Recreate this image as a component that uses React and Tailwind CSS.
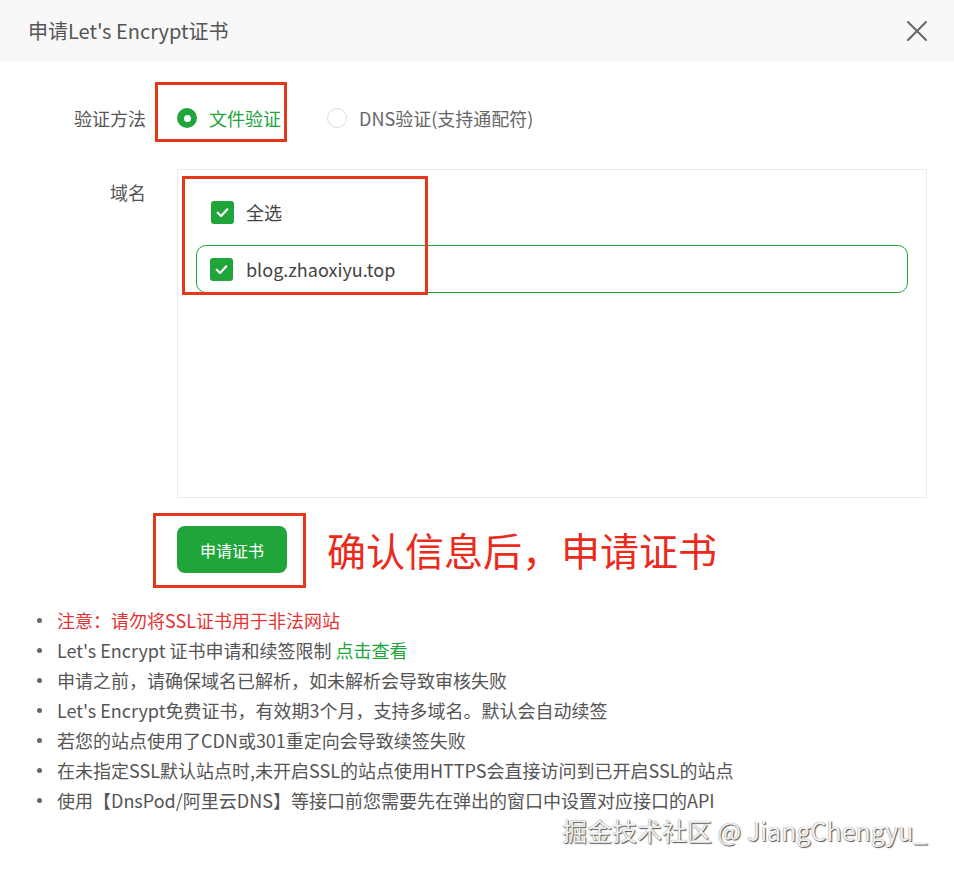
import React from 'react';

function Check() {
  return (
    <span className="w-[23px] h-[23px] rounded-[3px] bg-[#20a53a] flex items-center justify-center flex-shrink-0">
      <svg width="15" height="15" viewBox="0 0 14 14" fill="none">
        <path d="M2.5 7.2 L5.7 10.2 L11.5 4" stroke="#fff" strokeWidth="2" strokeLinecap="round" strokeLinejoin="round" />
      </svg>
    </span>
  );
}

const notes = [
  { text: '注意：请勿将SSL证书用于非法网站', red: true },
  { text: "Let's Encrypt 证书申请和续签限制 ", link: '点击查看' },
  { text: '申请之前，请确保域名已解析，如未解析会导致审核失败' },
  { text: "Let's Encrypt免费证书，有效期3个月，支持多域名。默认会自动续签" },
  { text: '若您的站点使用了CDN或301重定向会导致续签失败' },
  { text: '在未指定SSL默认站点时,未开启SSL的站点使用HTTPS会直接访问到已开启SSL的站点' },
  { text: '使用【DnsPod/阿里云DNS】等接口前您需要先在弹出的窗口中设置对应接口的API' },
];

export default function App() {
  return (
    <div
      className="relative w-[954px] h-[870px] bg-white overflow-hidden text-[#555]"
      style={{ fontFamily: '"Noto Sans CJK SC", "Noto Sans", sans-serif' }}
    >
      {/* Header */}
      <div className="h-[62px] bg-[#f8f8f8] flex items-center justify-between pl-[28px] pr-[26px]">
        <span className="text-[20px] text-[#555]">申请Let's Encrypt证书</span>
        <svg width="22" height="22" viewBox="0 0 22 22" fill="none">
          <path d="M2 2 L20 20 M20 2 L2 20" stroke="#666" strokeWidth="2" strokeLinecap="round" />
        </svg>
      </div>

      {/* 验证方法 */}
      <div className="mt-[36px] h-[40px] flex items-center">
        <div className="w-[146px] text-right text-[18px]">验证方法</div>
        <div className="ml-[31px] flex items-center">
          <label className="relative h-[40px] flex items-center gap-[12px]">
            <span className="w-[20px] h-[20px] rounded-full bg-[#20a53a] flex items-center justify-center">
              <span className="w-[7px] h-[7px] rounded-full bg-white" />
            </span>
            <span className="text-[18px] text-[#20a53a]">文件验证</span>
            <span className="absolute left-[-22px] top-[-16px] w-[132px] h-[60px] border-[3px] border-[#e5371c]" />
          </label>
          <label className="ml-[46px] h-[40px] flex items-center gap-[12px]">
            <span className="w-[20px] h-[20px] rounded-full border border-[#dcdcdc] bg-white" />
            <span className="text-[18px] text-[#666]">DNS验证(支持通配符)</span>
          </label>
        </div>
      </div>

      {/* 域名 */}
      <div className="mt-[31px] flex items-start">
        <div className="w-[146px] text-right text-[18px] pt-[10px]">域名</div>
        <div className="relative ml-[31px] w-[750px] h-[329px] border border-[#ebebeb] px-[18px] pt-[30px]">
          <div className="pl-[15px] h-[24px] flex items-center gap-[12px]">
            <Check />
            <span className="text-[18px] text-[#444]">全选</span>
          </div>
          <div className="mt-[21px] h-[48px] rounded-[10px] border border-[#20a53a] pl-[13px] flex items-center gap-[13px]">
            <Check />
            <span className="text-[18px] text-[#444]">blog.zhaoxiyu.top</span>
          </div>
          <span className="absolute left-[4px] top-[6px] w-[246px] h-[119px] border-[3px] border-[#e5371c]" />
        </div>
      </div>

      {/* 按钮 */}
      <div className="mt-[28px] ml-[177px] flex items-center">
        <div className="relative">
          <button className="w-[110px] h-[47px] rounded-[8px] bg-[#20a53a] text-white text-[16px]">申请证书</button>
          <span className="absolute left-[-24px] top-[-13px] w-[153px] h-[75px] border-[3px] border-[#e5371c]" />
        </div>
        <span className="ml-[40px] text-[39px] leading-none text-[#ec2a1c]">确认信息后，申请证书</span>
      </div>

      {/* 说明 */}
      <ul className="mt-[32px]">
        {notes.map((n, i) => (
          <li key={i} className="h-[30px] flex items-center pl-[37px] gap-[15px] text-[18px]">
            <span className="w-[5px] h-[5px] rounded-full bg-[#666] flex-shrink-0" />
            <span className={n.red ? 'text-[#e53333] whitespace-nowrap' : 'text-[#555] whitespace-nowrap'}>
              {n.text}
              {n.link && <span className="text-[#20a53a]">{n.link}</span>}
            </span>
          </li>
        ))}
      </ul>

      {/* 水印 */}
      <div className="absolute left-[562px] top-[813px] text-[25px] leading-[34px] text-[#f2f2f2] whitespace-nowrap [text-shadow:1px_1px_1px_#555,0_0_1px_#777]">
        掘金技术社区 @ JiangChengyu_
      </div>
    </div>
  );
}
